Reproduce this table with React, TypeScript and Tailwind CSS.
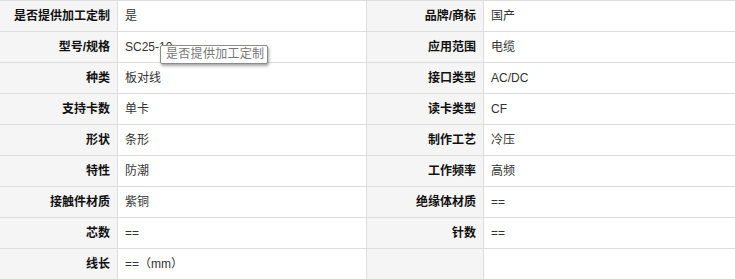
const rows: [string, string, string, string][] = [
  ['是否提供加工定制', '是', '品牌/商标', '国产'],
  ['型号/规格', 'SC25-10', '应用范围', '电缆'],
  ['种类', '板对线', '接口类型', 'AC/DC'],
  ['支持卡数', '单卡', '读卡类型', 'CF'],
  ['形状', '条形', '制作工艺', '冷压'],
  ['特性', '防潮', '工作频率', '高频'],
  ['接触件材质', '紫铜', '绝缘体材质', '=='],
  ['芯数', '==', '针数', '=='],
  ['线长', '==（mm）', '', ''],
]

const font = { fontFamily: '"Liberation Sans", "Noto Sans CJK SC", sans-serif' }

function Label({ text, w }: { text: string; w: string }) {
  return (
    <div
      className={`${w} flex h-[31px] shrink-0 items-center justify-end border-r border-b border-[#dddddd] bg-[#f5f5f5] pr-[7px] text-[12px] font-bold text-[#111]`}
    >
      {text}
    </div>
  )
}

function Value({ text, w }: { text: string; w: string }) {
  return (
    <div
      className={`${w} flex h-[31px] shrink-0 items-center border-r border-b border-[#dddddd] bg-white pl-[7px] text-[12px] text-[#333]`}
    >
      {text}
    </div>
  )
}

export default function App() {
  return (
    <div className="relative h-[279px] w-[735px] overflow-hidden bg-white" style={font}>
      <div className="border-t border-[#dddddd]">
        {rows.map((r, i) => (
          <div key={i} className="flex">
            <Label text={r[0]} w="w-[118px]" />
            <Value text={r[1]} w="w-[249px]" />
            <Label text={r[2]} w="w-[117px]" />
            <Value text={r[3]} w="w-[252px]" />
          </div>
        ))}
      </div>
      <div className="absolute top-[45px] left-[160px] h-[19px] w-[108px] rounded-[2px] border border-[#8c8c8c] bg-white pl-[5px] text-[12px] leading-[17px] tracking-[0.3px] text-[#777] shadow-[1px_2px_3px_rgba(0,0,0,0.35)]">
        是否提供加工定制
      </div>
    </div>
  )
}
